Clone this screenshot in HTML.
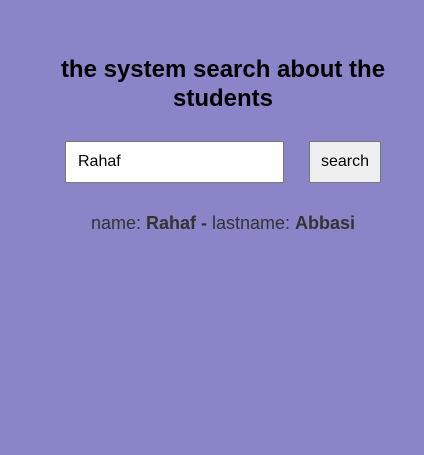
<!DOCTYPE html>
<html><head><style>
body{margin:0;width:424px;height:455px;background:#8a84c8;font-family:"Liberation Sans",sans-serif;position:relative;overflow:hidden}
h1{position:absolute;left:23px;width:400px;top:55px;margin:0;font-size:24px;line-height:29px;text-align:center;font-weight:bold;color:#000}
.inp{position:absolute;left:65px;top:141px;background:#fff;border:1px solid #777;box-sizing:border-box;width:219px;height:42px;font-size:16px;line-height:40px;padding-left:12px}
.btn{position:absolute;left:309px;top:141px;width:72px;height:42px;box-sizing:border-box;background:#efefef;border:1px solid #777;border-radius:2px;font-size:16px;line-height:40px;text-align:center}
.res{position:absolute;left:0;width:446px;top:213px;text-align:center;font-size:18px;color:#333}
</style></head><body>
<h1>the system search about the students</h1>
<div class="inp">Rahaf</div>
<div class="btn">search</div>
<div class="res">name: <b>Rahaf -</b> lastname: <b>Abbasi</b></div>
</body></html>
